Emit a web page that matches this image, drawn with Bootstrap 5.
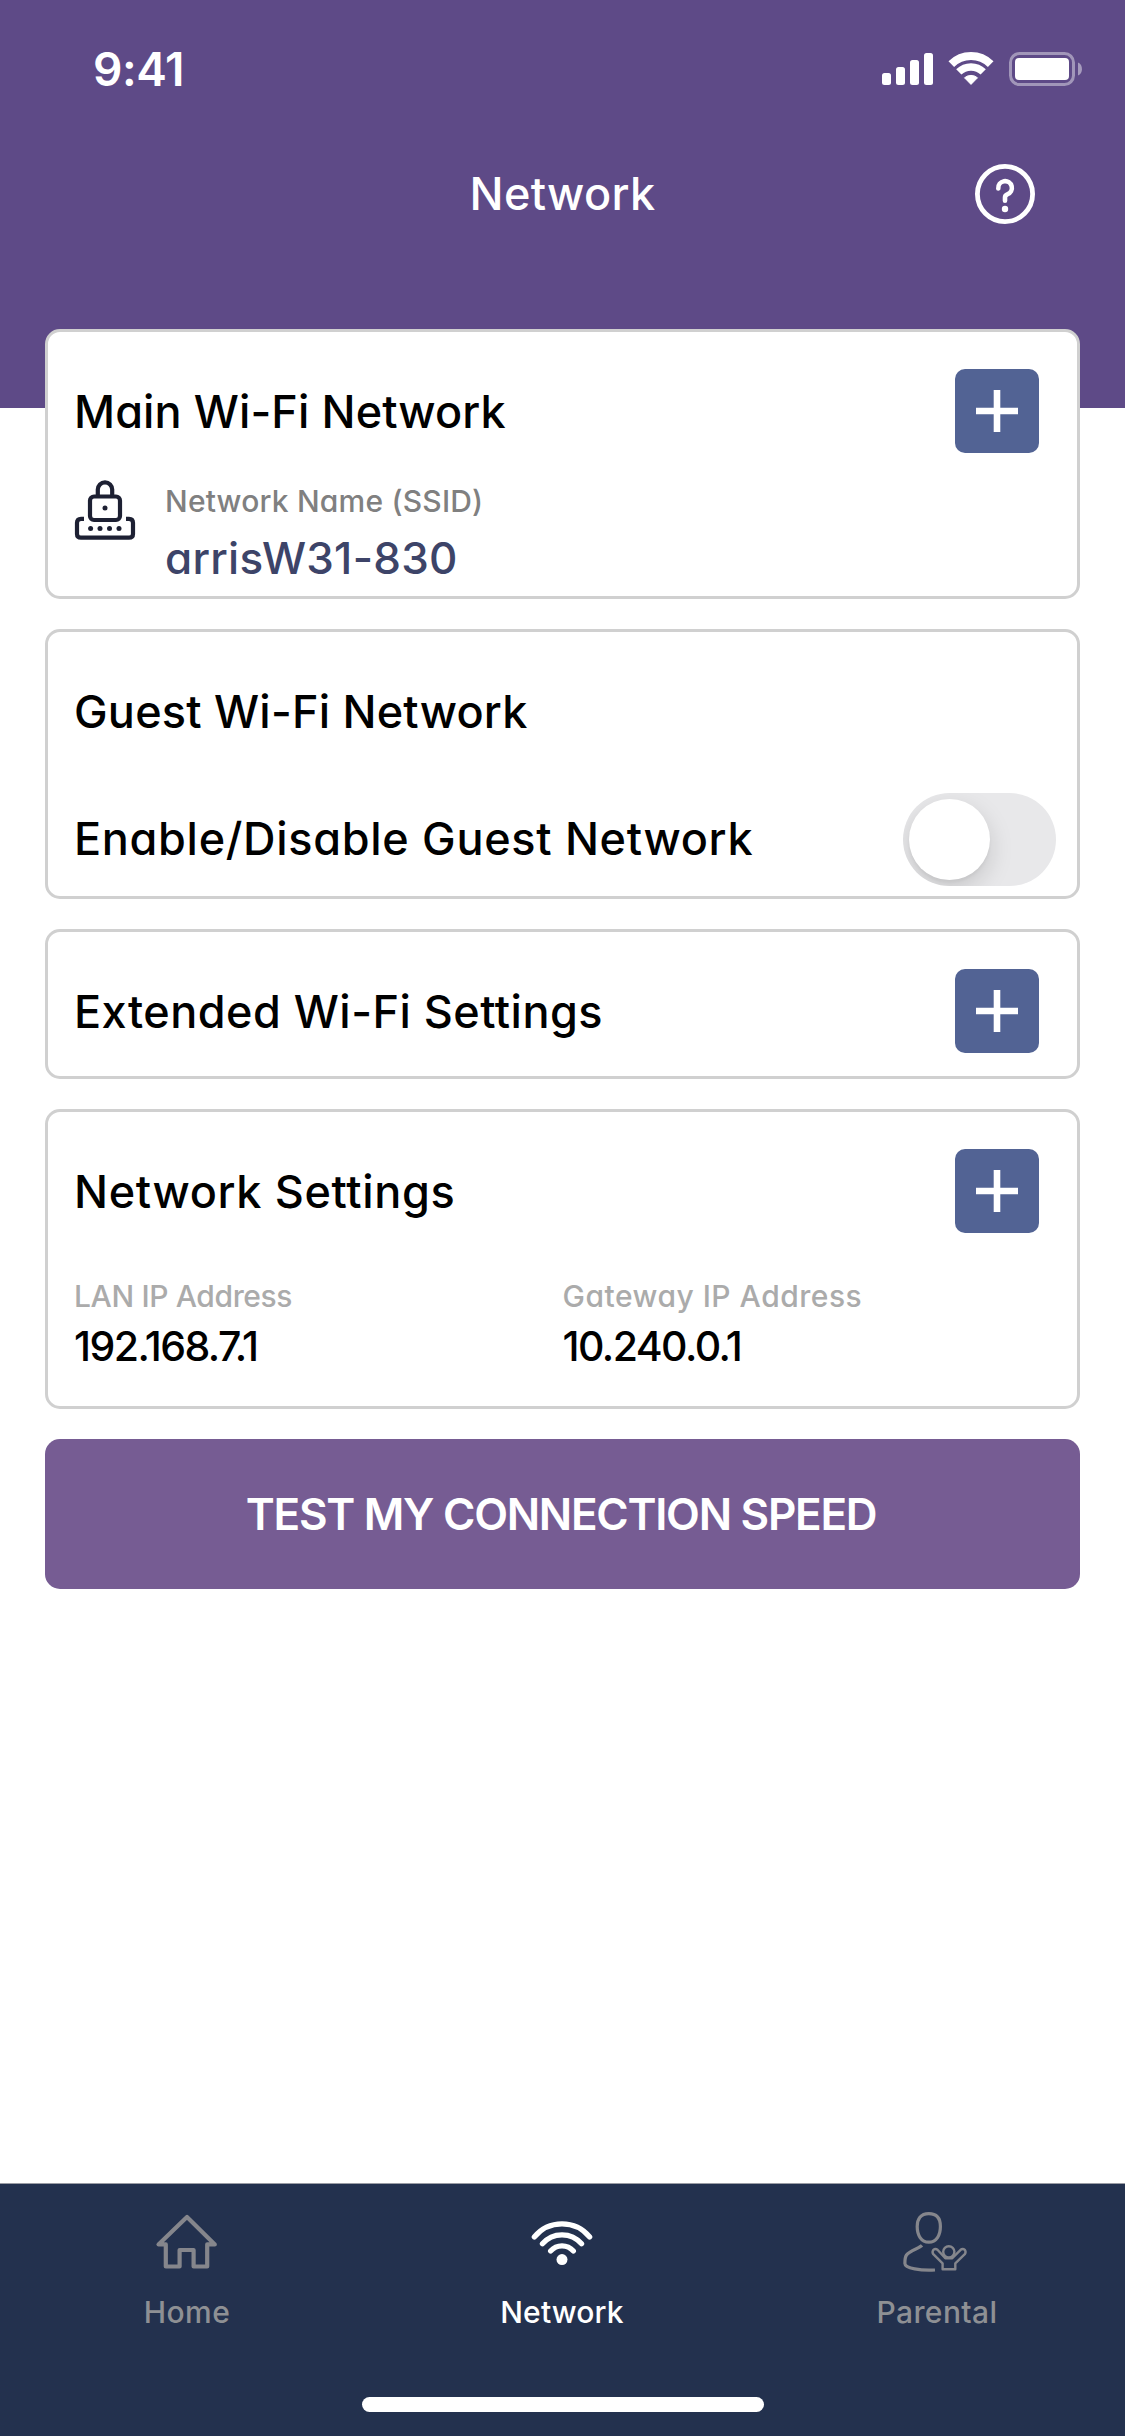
<!DOCTYPE html>
<html lang="en">
<head>
<meta charset="utf-8">
<meta name="viewport" content="width=device-width, initial-scale=1">
<title>Network</title>
<link href="https://cdn.jsdelivr.net/npm/bootstrap@5.3.0/dist/css/bootstrap.min.css" rel="stylesheet">
<style>
  body { font-family: Inter, "Liberation Sans", sans-serif; font-weight: 500; color: #000; background: #fff; }
  svg { display: block; overflow: visible; }
  .geo { font-feature-settings: "cv11"; }
  .screen { height: 2436px; }
  .app-header { height: 408px; background: #5e4a87; }
  .status-bar { height: 138px; padding: 0 43px 0 93px; }
  .clock { font-size: 46px; font-weight: 600; letter-spacing: -.42px; line-height: 1; }
  .title-bar { height: 111px; display: grid; grid-template-columns: 1fr auto 1fr; padding: 0 90px; }
  .screen-title { grid-column: 2; font-size: 45px; font-weight: 500; letter-spacing: .35px; line-height: 1; }
  .content { margin-top: -79px; padding: 0 45px; gap: 30px; }
  .panel { border: 3px solid #d0d0d0; border-radius: 15px; background: #fff; }
  .panel-main, .panel-guest { height: 270px; }
  .panel-extended { height: 150px; }
  .panel-settings { height: 300px; }
  .panel-head { height: 84px; margin-top: 37px; padding: 0 38px 0 26px; }
  .panel-title { font-size: 45px; font-weight: 500; line-height: 1; }
  .track-main { letter-spacing: .1px; }
  .track-guest { letter-spacing: .22px; }
  .track-extended { letter-spacing: .48px; }
  .track-settings { letter-spacing: .65px; }
  .add-btn { width: 84px; height: 84px; padding: 0; border: 0; border-radius: 10px; background: #526394; }
  .ssid { margin-top: 22px; padding-left: 27px; gap: 30px; height: 121px; }
  .ssid svg { margin-top: 5px; }
  .field-label { font-size: 30px; line-height: 50px; padding-top: 1px; margin-bottom: -1px; color: #808080; }
  .ssid-label { letter-spacing: .2px; }
  .ssid-name { font-size: 44px; line-height: 66px; letter-spacing: .25px; color: #3d4468; }
  .guest-row { margin-top: 40px; height: 93px; padding: 0 21px 0 26px; }
  .guest-row label { font-size: 45px; line-height: 1; letter-spacing: .69px; padding-bottom: 2px; }
  .toggle { width: 153px; height: 93px; padding: 6px; border-radius: 47px; background: #e8e8ea; overflow: hidden; }
  .knob { width: 81px; height: 81px; border-radius: 50%; background: #fff; box-shadow: 0 9px 24px rgba(0,0,0,.15), 0 3px 3px rgba(0,0,0,.04); }
  .ip-row { margin-top: 37px; }
  .ip-row .field-label { color: #ababab; }
  .first-col { padding-left: 26px; }
  .lan-label { letter-spacing: -.38px; }
  .gateway-label { letter-spacing: .5px; }
  .ip-value { font-size: 41px; line-height: 52px; letter-spacing: -1.55px; }
  .speed-btn { height: 150px; border: 0; border-radius: 15px; background: #765c93; color: #fff; font-size: 44px; font-weight: 600; letter-spacing: -1.28px; line-height: 1; padding: 0 3px 0 0; }
  .tab-bar { height: 253px; background: #23314e; border-top: 1px solid #9a9da5; }
  .tab-item { color: #8e9094; padding: 26px 1px 0 0; font-size: 30px; line-height: 40px; letter-spacing: .4px; }
  .tab-item svg { margin-bottom: 18px; color: #85868c; }
  .tab-item.active, .tab-item.active svg { color: #fff; }
  .tab-item.active { letter-spacing: .15px; }
  .home-bar { width: 402px; height: 15px; border-radius: 8px; background: #fff; margin-bottom: 24px; }
</style>
</head>
<body>
<div class="screen d-flex flex-column">
  <header class="app-header flex-shrink-0 text-white">
    <div class="status-bar d-flex align-items-center justify-content-between">
      <span class="clock">9:41</span>
      <svg width="200" height="38" viewBox="882 50 200 38" fill="#fff">
        <rect x="882" y="73" width="9" height="12" rx="2.5"/>
        <rect x="896" y="67" width="9" height="18" rx="2.5"/>
        <rect x="910" y="60" width="9" height="25" rx="2.5"/>
        <rect x="924" y="53" width="9" height="32" rx="2.5"/>
        <g fill="none" stroke="#fff" stroke-width="8">
          <path d="M951.3 64.2A28 28 0 0 1 990.7 64.2"/>
          <path d="M958.8 71.9A17.5 17.5 0 0 1 983.2 71.9" stroke-width="7.5"/>
        </g>
        <path d="M964.5 77.8A10 10 0 0 1 977.5 77.8L971 84.4Z" stroke="#fff" stroke-width="1" stroke-linejoin="round"/>
        <rect x="1010.5" y="53.5" width="63" height="31" rx="9" fill="none" stroke="#fff" stroke-width="3" opacity=".42"/>
        <rect x="1015" y="58" width="54" height="22" rx="4"/>
        <path d="M1078 62.5C1083.3 64.5 1083.3 73.5 1078 75.5Z" opacity=".45"/>
      </svg>
    </div>
    <div class="title-bar align-items-center">
      <h1 class="screen-title geo m-0">Network</h1>
      <svg class="ms-auto" width="60" height="60" viewBox="0 0 60 60" fill="none" stroke="#fff" stroke-linecap="round">
        <circle cx="30" cy="30" r="27.6" stroke-width="4.8"/>
        <path d="M23.3 24.5A6.8 6.8 0 1 1 32.3 30.4Q30 31.4 30 33.5V36.7" stroke-width="4.6"/>
        <circle cx="30" cy="45" r="3.2" fill="#fff" stroke="none"/>
      </svg>
    </div>
  </header>

  <main class="content geo d-flex flex-column">
    <section class="panel panel-main">
      <div class="panel-head d-flex align-items-center justify-content-between">
        <h2 class="panel-title track-main m-0">Main Wi-Fi Network</h2>
        <button class="btn add-btn d-flex align-items-center justify-content-center" aria-label="Expand">
          <svg width="42" height="42" viewBox="0 0 42 42" stroke="#fff" stroke-width="6.6"><path d="M21 0V42M0 21H42"/></svg>
        </button>
      </div>
      <div class="ssid d-flex align-items-start">
        <svg width="60" height="60" viewBox="0 0 60 60" fill="none" stroke="#1d2033" stroke-width="4.2" stroke-linecap="round">
          <path d="M22.8 15V9.5A7.2 7.2 0 0 1 37.2 9.5V15"/>
          <rect x="15" y="16.5" width="30" height="23.5" rx="4"/>
          <path d="M9 38.8H6Q2 38.8 2 42.8V54Q2 57.7 6 57.7H54Q58 57.7 58 54V42.8Q58 38.8 54 38.8H51" stroke-linecap="butt"/>
          <g fill="#1d2033" stroke="none">
            <circle cx="30" cy="28" r="2.5"/>
            <circle cx="15.6" cy="48.4" r="2.5"/><circle cx="25" cy="48.4" r="2.5"/><circle cx="34.5" cy="48.4" r="2.5"/><circle cx="44" cy="48.4" r="2.5"/>
          </g>
        </svg>
        <div>
          <div class="field-label ssid-label">Network Name (SSID)</div>
          <div class="ssid-name">arrisW31-830</div>
        </div>
      </div>
    </section>

    <section class="panel panel-guest">
      <div class="panel-head d-flex align-items-center">
        <h2 class="panel-title track-guest m-0">Guest Wi-Fi Network</h2>
      </div>
      <div class="guest-row d-flex align-items-center justify-content-between">
        <label>Enable/Disable Guest Network</label>
        <div class="toggle" role="switch" aria-checked="false"><div class="knob"></div></div>
      </div>
    </section>

    <section class="panel panel-extended">
      <div class="panel-head d-flex align-items-center justify-content-between">
        <h2 class="panel-title track-extended m-0">Extended Wi-Fi Settings</h2>
        <button class="btn add-btn d-flex align-items-center justify-content-center" aria-label="Expand">
          <svg width="42" height="42" viewBox="0 0 42 42" stroke="#fff" stroke-width="6.6"><path d="M21 0V42M0 21H42"/></svg>
        </button>
      </div>
    </section>

    <section class="panel panel-settings">
      <div class="panel-head d-flex align-items-center justify-content-between">
        <h2 class="panel-title track-settings m-0">Network Settings</h2>
        <button class="btn add-btn d-flex align-items-center justify-content-center" aria-label="Expand">
          <svg width="42" height="42" viewBox="0 0 42 42" stroke="#fff" stroke-width="6.6"><path d="M21 0V42M0 21H42"/></svg>
        </button>
      </div>
      <div class="ip-row row g-0">
        <div class="col-6 first-col">
          <div class="field-label lan-label">LAN IP Address</div>
          <div class="ip-value">192.168.7.1</div>
        </div>
        <div class="col-6">
          <div class="field-label gateway-label">Gateway IP Address</div>
          <div class="ip-value">10.240.0.1</div>
        </div>
      </div>
    </section>

    <button class="btn speed-btn w-100">TEST MY CONNECTION SPEED</button>
  </main>

  <nav class="tab-bar mt-auto flex-shrink-0 d-flex flex-column justify-content-between align-items-center">
    <div class="row g-0 w-100 text-center">
      <div class="col-4 tab-item d-flex flex-column align-items-center">
        <svg width="64" height="64" viewBox="0 0 64 64" fill="none" stroke="currentColor" stroke-width="4.2" stroke-linejoin="round"><path d="M32 7L3.5 34.4H10.8V56.5H24.6V40H38.6V56.5H52.2V34.4H59.8Z"/></svg>
        <span>Home</span>
      </div>
      <div class="col-4 tab-item active d-flex flex-column align-items-center">
        <svg width="64" height="64" viewBox="0 0 64 64" fill="none" stroke="currentColor" stroke-width="5.2" stroke-linecap="round"><path d="M4.3 27A35.8 35.8 0 0 1 59.7 27M12.4 33.8A25.8 25.8 0 0 1 51.6 33.8M20.6 41A15.1 15.1 0 0 1 43.4 41"/><circle cx="32" cy="49.6" r="5.5" fill="currentColor" stroke="none"/></svg>
        <span>Network</span>
      </div>
      <div class="col-4 tab-item d-flex flex-column align-items-center">
        <svg width="64" height="64" viewBox="0 0 64 64" fill="none" stroke="currentColor" stroke-width="3.2" stroke-linejoin="round">
          <path d="M23.8 3.6C32 3.6 35.4 9 35.4 16.5C35.4 25 31.5 32.2 23.8 32.2C16.1 32.2 12.2 25 12.2 16.5C12.2 9 15.6 3.6 23.8 3.6Z"/>
          <path d="M17 35.4C14 38.5 5 40.2 1.5 45C-.2 47.5-.1 50-.1 53.5C-.1 58.5 16 60.8 30 60"/>
          <g stroke-width="2.4"><circle cx="43.8" cy="41.8" r="5.6"/>
          <path d="M37.6 59.3V53.3L28.3 44.2Q26.8 42 28.3 39.9Q30.4 38.2 32.5 39.8L40.3 48.2H47.3L55.6 39.8Q57.8 38.2 59.9 39.9Q61.3 42 59.8 44.2L50.3 53.3V59.3Z"/></g>
        </svg>
        <span>Parental</span>
      </div>
    </div>
    <div class="home-bar"></div>
  </nav>
</div>
<script src="https://cdn.jsdelivr.net/npm/bootstrap@5.3.0/dist/js/bootstrap.bundle.min.js"></script>
</body>
</html>
